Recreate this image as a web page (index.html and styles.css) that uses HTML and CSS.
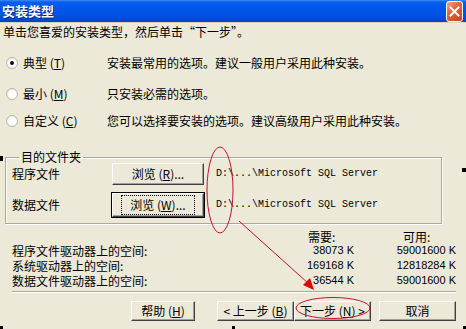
FILE: index.html
```html
<!DOCTYPE html>
<html lang="zh-CN">
<head>
    <meta charset="UTF-8">
    <title>安装类型</title>
    <link rel="stylesheet" href="styles.css">
</head>
<body>
    <div class="dialog">
        <!-- barra de titulo -->
        <div class="titlebar">
            <span class="title">安装类型</span>
            <span class="close-btn">
                <svg width="11" height="11" viewBox="0 0 11 11"><path d="M1.5 1.5 L9.5 9.5 M9.5 1.5 L1.5 9.5" stroke="#fff" stroke-width="2" stroke-linecap="square"/></svg>
            </span>
        </div>

        <p class="intro">单击您喜爱的安装类型，然后单击“下一步”。</p>

        <div class="options">
            <div class="option">
                <span class="radio checked"></span>
                <span class="opt-label">典型 (<u>T</u>)</span>
                <span class="opt-desc">安装最常用的选项。建议一般用户采用此种安装。</span>
            </div>
            <div class="option opt-mid">
                <span class="radio"></span>
                <span class="opt-label">最小 (<u>M</u>)</span>
                <span class="opt-desc">只安装必需的选项。</span>
            </div>
            <div class="option opt-last">
                <span class="radio"></span>
                <span class="opt-label">自定义 (<u>C</u>)</span>
                <span class="opt-desc">您可以选择要安装的选项。建议高级用户采用此种安装。</span>
            </div>
        </div>

        <fieldset class="dest">
            <legend>目的文件夹</legend>
            <div class="dest-row">
                <span class="dest-label">程序文件</span>
                <span class="btn browse">浏览 (<u>R</u>)...</span>
                <span class="path">D:\...\Microsoft SQL Server</span>
            </div>
            <div class="dest-row second">
                <span class="dest-label">数据文件</span>
                <span class="btn browse focused"><span class="focus-ring">浏览 (<u>W</u>)...</span></span>
                <span class="path">D:\...\Microsoft SQL Server</span>
            </div>
        </fieldset>

        <div class="space">
            <span></span>
            <span class="head need">需要:</span>
            <span class="head avail">可用:</span>

            <span class="space-label">程序文件驱动器上的空间:</span>
            <span class="num">38073 K</span>
            <span class="num">59001600 K</span>

            <span class="space-label">系统驱动器上的空间:</span>
            <span class="num">169168 K</span>
            <span class="num">12818284 K</span>

            <span class="space-label">数据文件驱动器上的空间:</span>
            <span class="num">36544 K</span>
            <span class="num">59001600 K</span>
        </div>

        <div class="separator"></div>

        <div class="buttons">
            <span class="btn help">帮助 (<u>H</u>)</span>
            <span class="btn nav">&lt; 上一步 (<u>B</u>)</span>
            <span class="btn nav">下一步 (<u>N</u>) &gt;</span>
            <span class="btn cancel">取消</span>
        </div>

        <!-- marcas de selecao -->
        <span class="handle h-left"></span>
        <span class="handle h-right"></span>
        <span class="handle h-bl"></span>
        <span class="handle h-bc"></span>
        <span class="handle h-br"></span>

        <!-- anotacoes em vermelho -->
        <svg class="marks" width="466" height="329" viewBox="0 0 466 329">
            <ellipse cx="220" cy="190" rx="13" ry="43" fill="none" stroke="#c8102e" stroke-width="1"/>
            <line x1="239" y1="221" x2="309" y2="284" stroke="#c8102e" stroke-width="1"/>
            <polygon points="314,290 303,285 310,278" fill="#e00000"/>
            <ellipse cx="333" cy="308" rx="37" ry="10.5" fill="none" stroke="#c8102e" stroke-width="1"/>
        </svg>
    </div>
</body>
</html>
```

FILE: styles.css
```css
* {
    margin: 0;
    padding: 0;
    box-sizing: border-box;
}

body {
    background-color: #ECE9D8;
}

.dialog {
    position: relative;
    width: 466px;
    height: 329px;
    overflow: hidden;
    background-color: #ECE9D8;
    font-family: "Noto Sans CJK SC", "Liberation Sans", sans-serif;
    font-size: 12px;
    line-height: 14px;
    color: #000;
}

u {
    text-decoration: underline;
    text-underline-offset: 1px;
}

/* titulo */
.titlebar {
    display: flex;
    align-items: flex-start;
    justify-content: space-between;
    height: 23px;
    padding: 0 3px 0 2px;
    background: linear-gradient(#3a8cf8 0, #0a5fe8 2px, #0058ee 6px, #0054e3 14px, #0049d4 20px, #0a3fc0 22px, #d8d4c4 22px, #d8d4c4 23px);
}

.title {
    color: #fff;
    font-weight: bold;
    font-size: 13px;
    line-height: 22px;
    text-shadow: 1px 1px 0 #0a1e7a;
}

.close-btn {
    display: flex;
    align-items: center;
    justify-content: center;
    width: 17px;
    height: 21px;
    margin-top: 1px;
    border: 1px solid #fff;
    border-radius: 3px;
    background: linear-gradient(135deg, #f2a58c 0%, #e2653f 40%, #c8401c 100%);
}

.intro {
    margin-top: 2px;
    padding-left: 3px;
}

/* opcoes */
.options {
    margin-top: 17px;
}

.option {
    display: flex;
    align-items: center;
    height: 14px;
}

.opt-mid {
    margin-top: 17px;
}

.opt-last {
    margin-top: 13px;
}

.radio {
    position: relative;
    width: 12px;
    height: 12px;
    margin-left: 6px;
    border: 1px solid #b9b6a6;
    border-radius: 50%;
    background: radial-gradient(circle at 60% 60%, #fff 40%, #e4e2d8 100%);
}

.radio.checked::after {
    content: "";
    position: absolute;
    left: 3px;
    top: 3px;
    width: 4px;
    height: 4px;
    border-radius: 50%;
    background-color: #111;
}

.opt-label {
    width: 84px;
    margin-left: 5px;
}

/* pasta de destino */
.dest {
    margin: 23px 0 0 5px;
    width: 437px;
    padding: 0 6px 6px 6px;
    border: 1px solid #aca899;
    box-shadow: inset 1px 1px 0 #fff, 1px 1px 0 #fff;
    min-inline-size: 0;
}

.dest legend {
    margin-left: 7px;
    padding: 0 2px;
    line-height: 12px;
}

.dest-row {
    display: flex;
    align-items: center;
    height: 22px;
}

.dest-row.second {
    margin-top: 8px;
    height: 24px;
}

.dest-label {
    width: 100px;
}

.btn {
    display: flex;
    align-items: center;
    justify-content: center;
    height: 22px;
    background-color: #ECE9D8;
    border: 1px solid;
    border-color: #fff #404040 #404040 #fff;
    box-shadow: inset -1px -1px 0 #a0a0a0;
    white-space: nowrap;
}

.browse {
    width: 92px;
}

.focused {
    height: 24px;
    outline: 1px solid #000;
}

.focus-ring {
    padding: 2px 8px;
    border: 1px dotted #000;
    line-height: 14px;
}

.path {
    margin-left: 12px;
    font-family: "Liberation Mono", monospace;
    font-size: 10px;
}

/* espaco em disco */
.space {
    display: grid;
    grid-template-columns: 288px 56px 102px;
    margin: 7px 0 0 12px;
    line-height: 15px;
}

.head {
    line-height: 12px;
}

.need {
    padding-left: 8px;
}

.avail {
    padding-left: 47px;
}

.num {
    text-align: right;
    padding-right: 2px;
    font-family: "Liberation Sans", sans-serif;
    font-size: 11px;
}

.separator {
    margin: 3px 10px 0 12px;
    border-top: 1px solid #aca899;
    border-bottom: 1px solid #fff;
}

/* botoes */
.buttons {
    display: flex;
    margin-top: 8px;
    padding-left: 131px;
}

.buttons .btn {
    height: 20px;
}

.help {
    width: 64px;
    margin-right: 22px;
}

.nav {
    width: 77px;
}

.cancel {
    width: 77px;
    margin-left: 8px;
}

/* marcas de selecao */
.handle {
    position: absolute;
    background-color: #000;
}

.h-left {
    left: 0;
    top: 156px;
    width: 3px;
    height: 5px;
}

.h-right {
    left: 462px;
    top: 168px;
    width: 4px;
    height: 4px;
}

.h-bl {
    left: 0;
    top: 326px;
    width: 3px;
    height: 3px;
}

.h-bc {
    left: 232px;
    top: 326px;
    width: 3px;
    height: 3px;
}

.h-br {
    left: 463px;
    top: 326px;
    width: 3px;
    height: 3px;
}

.marks {
    position: absolute;
    left: 0;
    top: 0;
    pointer-events: none;
}
```
